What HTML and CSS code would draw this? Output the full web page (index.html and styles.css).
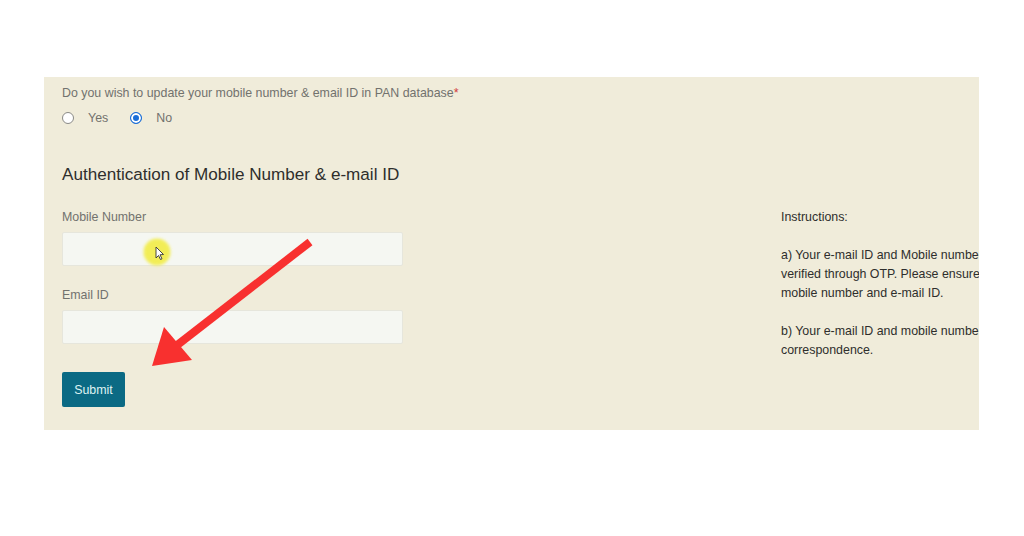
FILE: index.html
```html
<!DOCTYPE html>
<html>
<head>
<meta charset="utf-8">
<link rel="stylesheet" href="styles.css">
</head>
<body>
<div class="panel">
  <p class="question">Do you wish to update your mobile number &amp; email ID in PAN database<span class="req">*</span></p>
  <div class="radios">
    <label class="opt"><span class="radio"></span><span>Yes</span></label>
    <label class="opt"><span class="radio checked"></span><span>No</span></label>
  </div>
  <h2 class="heading">Authentication of Mobile Number &amp; e-mail ID</h2>
  <div class="row">
    <div class="form">
      <div class="label">Mobile Number</div>
      <div class="input"></div>
      <div class="label second">Email ID</div>
      <div class="input"></div>
      <button class="submit">Submit</button>
    </div>
    <div class="instructions">
      <p>Instructions:</p>
      <p>a) Your e-mail ID and Mobile number will be<br>verified through OTP. Please ensure you enter<br>mobile number and e-mail ID.</p>
      <p>b) Your e-mail ID and mobile number will be used<br>correspondence.</p>
    </div>
  </div>
</div>
<svg class="overlay" width="1024" height="536" viewBox="0 0 1024 536">
  <defs>
    <filter id="soft" x="-50%" y="-50%" width="200%" height="200%">
      <feGaussianBlur stdDeviation="1.5"/>
    </filter>
  </defs>
  <circle cx="157" cy="252" r="13.5" fill="#f2ec3c" opacity="0.85" filter="url(#soft)"/>
  <path d="M156 247 L156 258 L158.5 255.5 L160.5 259.5 L162 258.8 L160 254.8 L163.5 254.5 Z" fill="#fff" stroke="#333" stroke-width="0.9" stroke-linejoin="round"/>
  <line x1="310" y1="242" x2="176" y2="346" stroke="#f8302f" stroke-width="8"/>
  <polygon points="152,366 164,327 192,360" fill="#f8302f"/>
</svg>
</body>
</html>
```

FILE: styles.css
```css
html, body {
  margin: 0;
  padding: 0;
  background: #ffffff;
}
body {
  font-family: "Liberation Sans", Arial, sans-serif;
  width: 1024px;
  height: 536px;
  position: relative;
  overflow: hidden;
}
.panel {
  margin: 77px 0 0 44px;
  width: 935px;
  height: 353px;
  box-sizing: border-box;
  background: #f0ecda;
  padding: 8px 0 0 18px;
  overflow: hidden;
}
.question {
  margin: 0;
  font-size: 12.4px;
  line-height: 16px;
  color: #72726e;
}
.req {
  color: #d04040;
}
.radios {
  display: flex;
  margin-top: 9px;
  height: 16px;
  align-items: center;
}
.opt {
  display: flex;
  align-items: center;
  font-size: 12.4px;
  color: #72726e;
  margin-right: 22px;
}
.radio {
  width: 10px;
  height: 10px;
  border: 1px solid #8a8a86;
  border-radius: 50%;
  background: #ffffff;
  margin-right: 14px;
  box-sizing: content-box;
}
.radio.checked {
  border-color: #1a6ed8;
  background: #1a6ed8;
  box-shadow: inset 0 0 0 2px #ffffff;
}
.heading {
  margin: 38px 0 0 0;
  font-size: 17.1px;
  line-height: 22px;
  font-weight: normal;
  color: #2e2e2c;
}
.row {
  display: flex;
  margin-top: 22px;
}
.form {
  width: 341px;
  display: flex;
  flex-direction: column;
  align-items: flex-start;
  margin-top: 1px;
}
.label {
  font-size: 12.4px;
  line-height: 16px;
  color: #72726e;
}
.label.second {
  margin-top: 21px;
}
.input {
  margin-top: 7px;
  width: 341px;
  height: 34px;
  box-sizing: border-box;
  background: #f5f7f2;
  border: 1px solid #e6e6dc;
  border-radius: 2px;
}
.submit {
  margin-top: 28px;
  width: 63px;
  height: 35px;
  border: none;
  border-radius: 2px;
  background: #0b6a84;
  color: #dff3f3;
  font-family: "Liberation Sans", Arial, sans-serif;
  font-size: 12.4px;
  padding: 0;
}
.instructions {
  margin-left: 378px;
  font-size: 12.4px;
  line-height: 19px;
  color: #2e2e2c;
  white-space: nowrap;
}
.instructions p {
  margin: 0 0 19px 0;
}
.overlay {
  position: absolute;
  left: 0;
  top: 0;
  pointer-events: none;
}
```
